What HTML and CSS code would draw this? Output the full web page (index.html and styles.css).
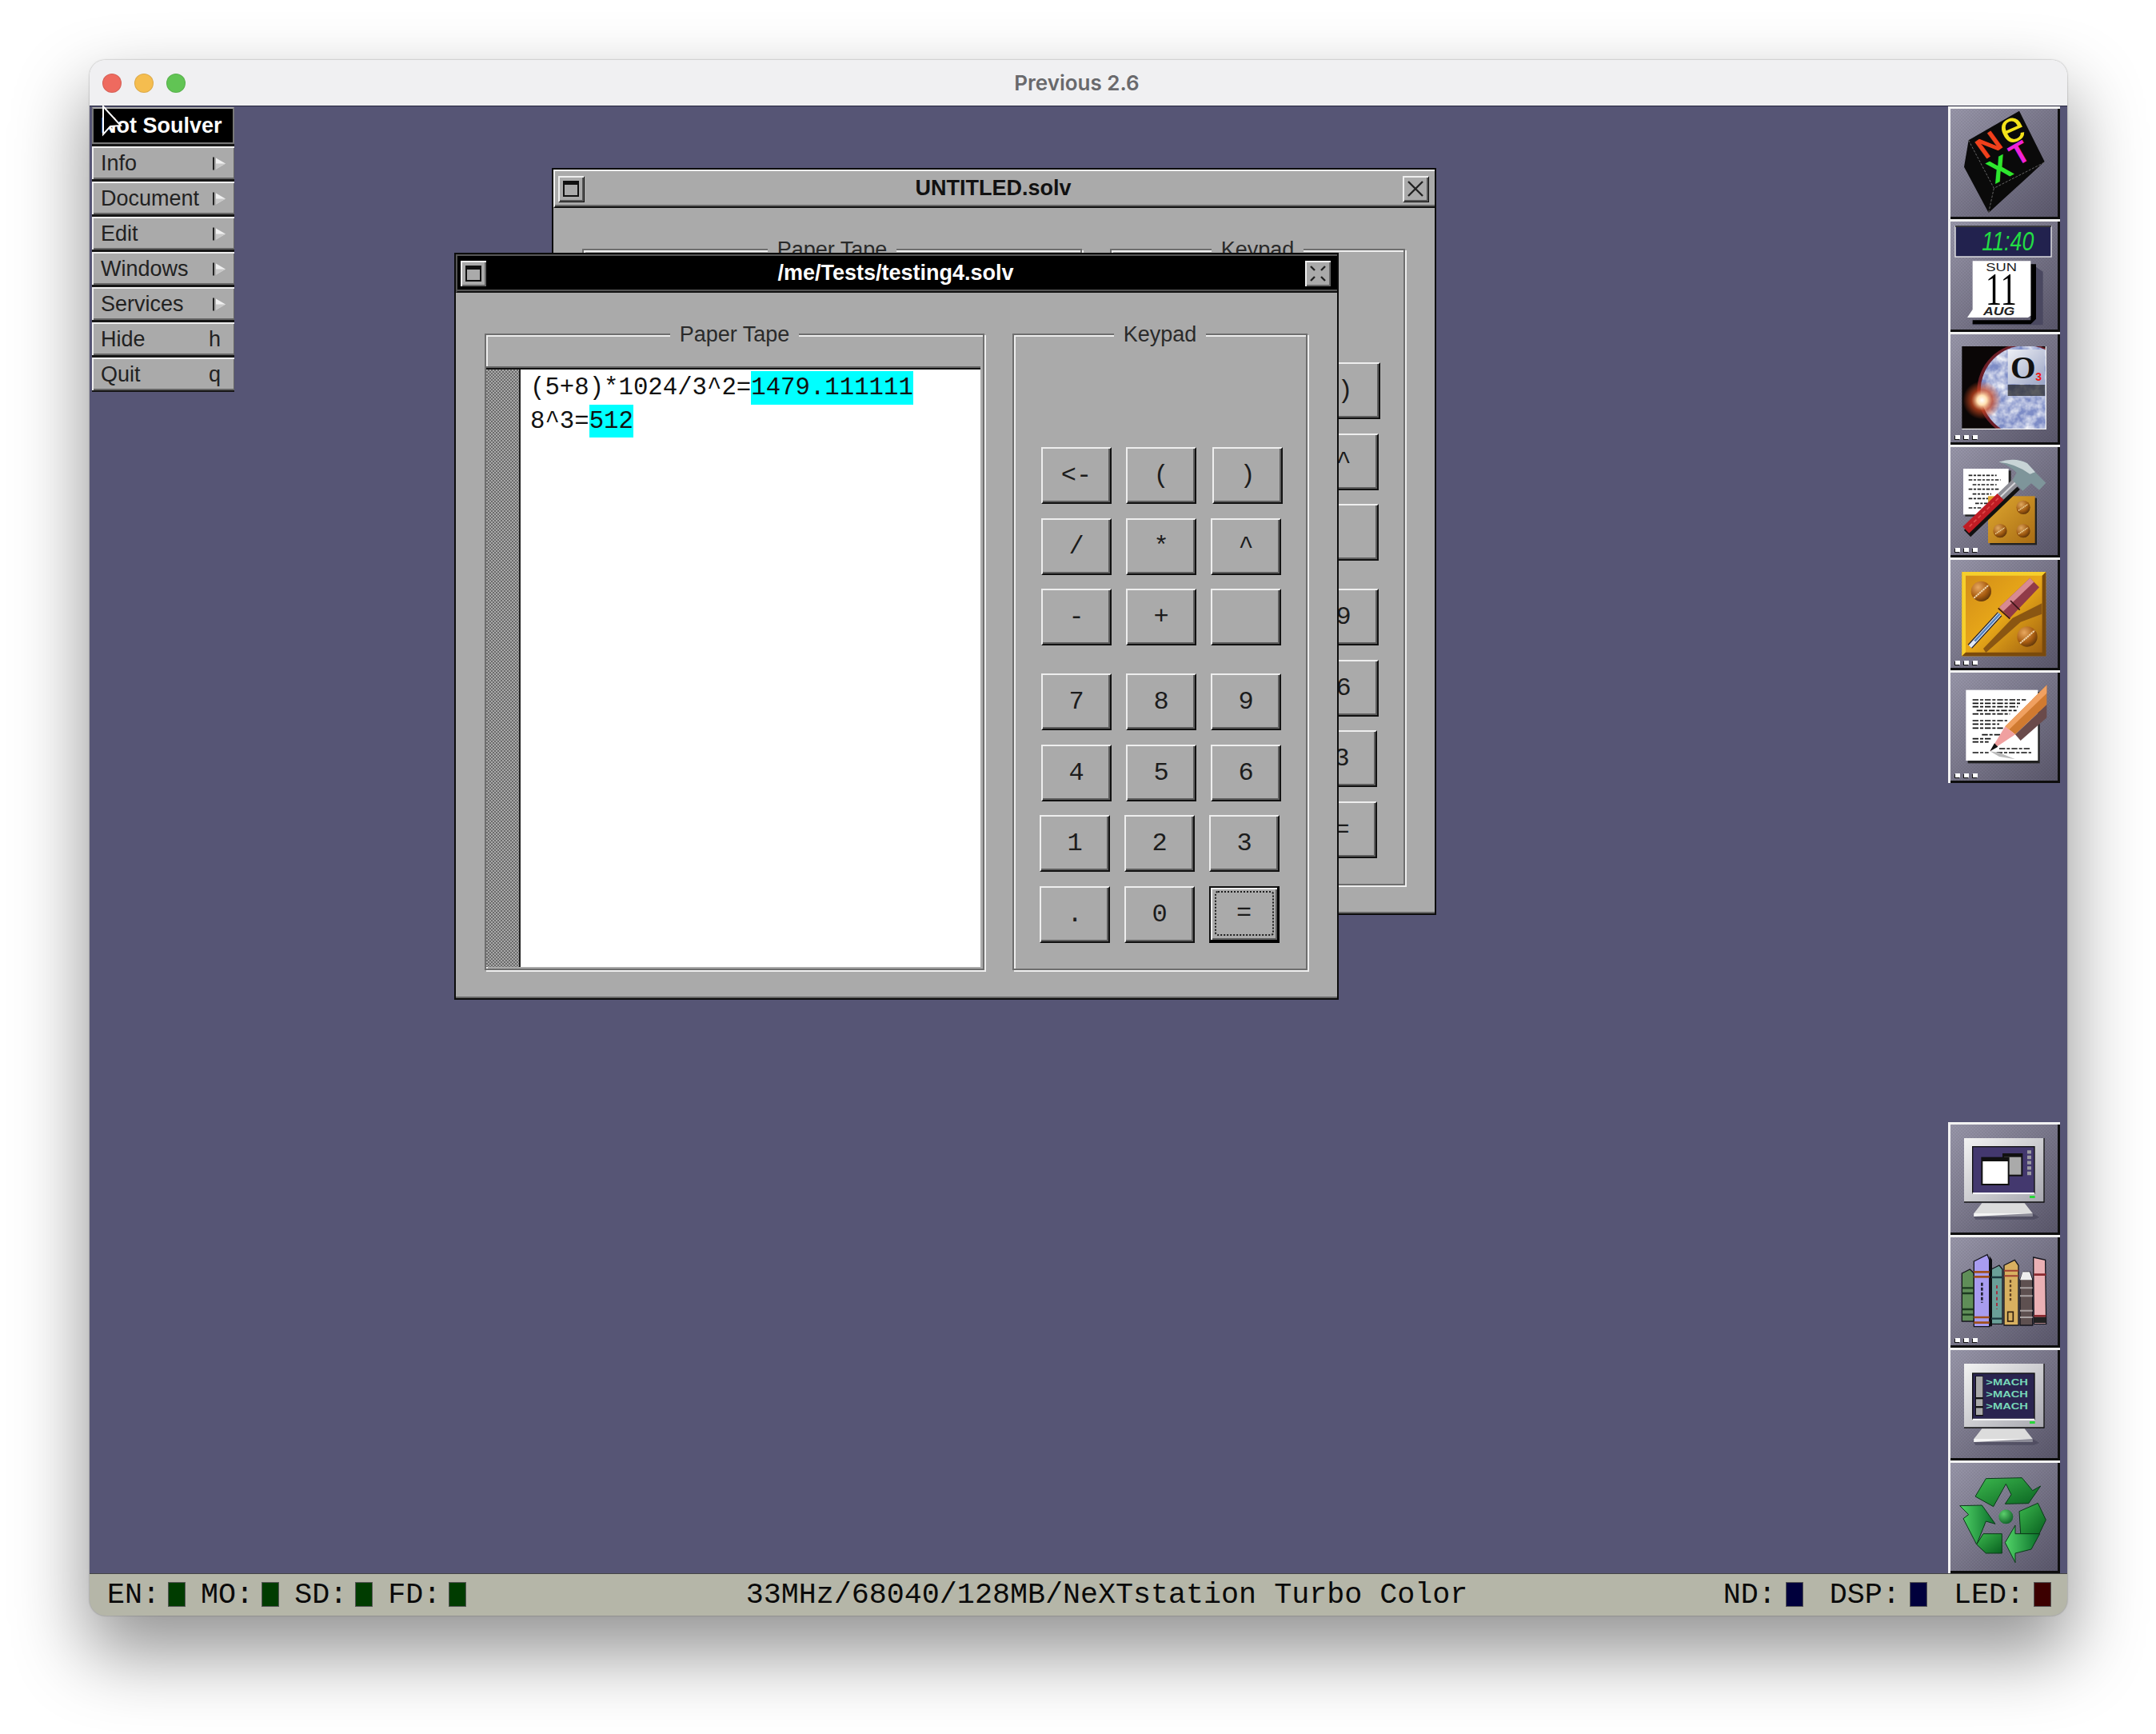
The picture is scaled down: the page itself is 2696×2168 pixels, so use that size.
FILE: index.html
```html
<!DOCTYPE html>
<html>
<head>
  <meta charset="UTF-8" />
  <title>Previous 2.6</title>
  <link rel="stylesheet" href="styles.css">
</head>
<body>
  <div class="mac">
    <div class="mac-title">
      <span class="light light-red"></span>
      <span class="light light-yellow"></span>
      <span class="light light-green"></span>
      <span class="mac-name">Previous 2.6</span>
    </div>

    <div class="desktop">
      <!-- app menu -->
      <div class="menu">
        <div class="menu-title">Not Soulver</div>
        <div class="menu-item">Info <svg class="arrow" viewBox="0 0 16 16"><path d="M1 0v16" stroke="#222" stroke-width="2"/><path d="M4 1l12 7-12 7z" fill="#f0f0f0"/><path d="M4 15l12-7H4z" fill="#c8c8c8"/></svg></div>
        <div class="menu-item">Document <svg class="arrow" viewBox="0 0 16 16"><path d="M1 0v16" stroke="#222" stroke-width="2"/><path d="M4 1l12 7-12 7z" fill="#f0f0f0"/><path d="M4 15l12-7H4z" fill="#c8c8c8"/></svg></div>
        <div class="menu-item">Edit <svg class="arrow" viewBox="0 0 16 16"><path d="M1 0v16" stroke="#222" stroke-width="2"/><path d="M4 1l12 7-12 7z" fill="#f0f0f0"/><path d="M4 15l12-7H4z" fill="#c8c8c8"/></svg></div>
        <div class="menu-item">Windows <svg class="arrow" viewBox="0 0 16 16"><path d="M1 0v16" stroke="#222" stroke-width="2"/><path d="M4 1l12 7-12 7z" fill="#f0f0f0"/><path d="M4 15l12-7H4z" fill="#c8c8c8"/></svg></div>
        <div class="menu-item">Services <svg class="arrow" viewBox="0 0 16 16"><path d="M1 0v16" stroke="#222" stroke-width="2"/><path d="M4 1l12 7-12 7z" fill="#f0f0f0"/><path d="M4 15l12-7H4z" fill="#c8c8c8"/></svg></div>
        <div class="menu-item">Hide <span class="shortcut">h</span></div>
        <div class="menu-item">Quit <span class="shortcut">q</span></div>
      </div>

      <!-- window behind -->
      <div class="win win-back">
        <div class="win-bar">
          <span class="win-btn mini"><i></i></span>
          <span class="win-name">UNTITLED.solv</span>
          <span class="win-btn close"><svg viewBox="0 0 28 28"><path d="M5 5l18 18M23 5L5 23" stroke="#222" stroke-width="2.4"/></svg></span>
        </div>
        <div class="win-body">
          <fieldset class="group group-tape">
            <legend>Paper Tape</legend>
            <div class="tape"><div class="ruler"></div><div class="tape-text"></div></div>
          </fieldset>
          <fieldset class="group group-keys">
            <legend>Keypad</legend>
            <div class="keys">
              <div class="key-row"><button class="key">&lt;-</button><button class="key">(</button><button class="key key-far">)</button></div>
              <div class="key-row"><button class="key">/</button><button class="key">*</button><button class="key">^</button></div>
              <div class="key-row"><button class="key">-</button><button class="key">+</button><button class="key"></button></div>
              <div class="key-row key-row-split"><button class="key">7</button><button class="key">8</button><button class="key">9</button></div>
              <div class="key-row"><button class="key">4</button><button class="key">5</button><button class="key">6</button></div>
              <div class="key-row key-row-left"><button class="key">1</button><button class="key">2</button><button class="key">3</button></div>
              <div class="key-row key-row-left"><button class="key">.</button><button class="key">0</button><button class="key">=</button></div>
            </div>
          </fieldset>
        </div>
      </div>

      <!-- key window -->
      <div class="win win-front">
        <div class="win-bar">
          <span class="win-btn mini"><i></i></span>
          <span class="win-name">/me/Tests/testing4.solv</span>
          <span class="win-btn close"><svg viewBox="0 0 28 28"><path d="M5 5l5 5M23 5l-5 5M5 23l5-5M23 23l-5-5" stroke="#222" stroke-width="2.4"/></svg></span>
        </div>
        <div class="win-body">
          <fieldset class="group group-tape">
            <legend>Paper Tape</legend>
            <div class="tape">
              <div class="ruler"></div>
              <div class="tape-text">
                <div class="tape-line">(5+8)*1024/3^2=<span class="hl">1479.111111</span></div>
                <div class="tape-line">8^3=<span class="hl">512</span></div>
              </div>
            </div>
          </fieldset>
          <fieldset class="group group-keys">
            <legend>Keypad</legend>
            <div class="keys">
              <div class="key-row"><button class="key">&lt;-</button><button class="key">(</button><button class="key key-far">)</button></div>
              <div class="key-row"><button class="key">/</button><button class="key">*</button><button class="key">^</button></div>
              <div class="key-row"><button class="key">-</button><button class="key">+</button><button class="key"></button></div>
              <div class="key-row key-row-split"><button class="key">7</button><button class="key">8</button><button class="key">9</button></div>
              <div class="key-row"><button class="key">4</button><button class="key">5</button><button class="key">6</button></div>
              <div class="key-row key-row-left"><button class="key">1</button><button class="key">2</button><button class="key">3</button></div>
              <div class="key-row key-row-left"><button class="key">.</button><button class="key">0</button><button class="key key-default"><span>=</span></button></div>
            </div>
          </fieldset>
        </div>
      </div>

      <!-- dock -->
      <div class="dock">
        <div class="tile">
          <svg viewBox="48 38 420 423">
            <polygon points="315,55 410,245 200,437 108,265 125,165" fill="#0a0a0a"/>
            <path d="M125 165L220 345L410 248M220 345L200 437" stroke="#666" stroke-width="3" stroke-dasharray="9 5" fill="none"/>
            <text class="cube" transform="translate(186 240) rotate(-36) scale(1.12 1)" font-size="112" fill="#f0401c">N</text>
            <text class="cube cube-e" transform="translate(266 186) rotate(-24)" font-size="165" fill="#f4e31a">e</text>
            <text class="cube" transform="translate(224 330) rotate(-28)" font-size="124" fill="#2ee62e">X</text>
            <text class="cube" transform="translate(306 264) rotate(-30)" font-size="112" fill="#f022d8">T</text>
          </svg>
        </div>
        <div class="tile">
          <svg viewBox="48 461 420 423">
            <rect x="75" y="488" width="360" height="114" fill="#22224e" stroke="#eee" stroke-width="4"/>
            <path d="M75 488h360" stroke="#111" stroke-width="5"/>
            <text class="lcd" x="175" y="577" font-size="100" textLength="195" lengthAdjust="spacingAndGlyphs">11:40</text>
            <path d="M360 628l44 30v200H140v-8l220-2z" fill="#4a4860"/>
            <path d="M358 630h20v205l-20 20H140v-15h218z" fill="#000"/>
            <path d="M140 618h218v205l-10 7H120l20-30z" fill="#fff"/>
            <text class="cal-day" x="190" y="656" font-size="42" textLength="116" lengthAdjust="spacingAndGlyphs">SUN</text>
            <text class="cal-num" x="188" y="782" font-size="170" textLength="118" lengthAdjust="spacingAndGlyphs">11</text>
            <text class="cal-mon" x="180" y="822" font-size="44" textLength="118" lengthAdjust="spacingAndGlyphs">AUG</text>
          </svg>
        </div>
        <div class="tile">
          <svg viewBox="48 884 420 423">
            <defs>
              <radialGradient id="flare"><stop offset="0" stop-color="#fff"/><stop offset=".25" stop-color="#ffe0b0"/><stop offset=".55" stop-color="#d04a20" stop-opacity=".7"/><stop offset="1" stop-color="#d04a20" stop-opacity="0"/></radialGradient>
              <clipPath id="space"><rect x="100" y="938" width="315" height="310"/></clipPath>
              <filter id="clouds" x="0" y="0" width="1" height="1"><feTurbulence type="fractalNoise" baseFrequency=".03" numOctaves="3" seed="4"/><feColorMatrix values="0 0 0 0 1 0 0 0 0 1 0 0 0 0 1 1.6 0 0 0 -0.45"/><feComposite in2="SourceGraphic" operator="in"/></filter>
              <linearGradient id="o3" x1="0" y1="0" x2="1" y2="1"><stop offset="0" stop-color="#eef0f6"/><stop offset="1" stop-color="#9aa4c4"/></linearGradient>
            </defs>
            <rect x="100" y="938" width="315" height="310" fill="#0a0606"/>
            <g clip-path="url(#space)">
              <circle cx="335" cy="1105" r="178" fill="#6d1f28"/>
              <circle cx="340" cy="1105" r="170" fill="#7d8cc6"/>
              <circle cx="340" cy="1105" r="170" fill="#fff" filter="url(#clouds)"/>
              <circle cx="175" cy="1140" r="72" fill="url(#flare)"/>
              <rect x="272" y="1082" width="140" height="42" fill="#222" opacity=".7"/>
            </g>
            <rect x="272" y="950" width="138" height="130" fill="url(#o3)"/>
            <text class="omni" x="282" y="1058" font-size="122">O</text>
            <text class="omni-3" x="376" y="1068" font-size="42">3</text>
            <path d="M415 938v310H100" stroke="#eee" stroke-width="4" fill="none"/>
          </svg>
          <span class="dots"><i></i><i></i><i></i></span>
        </div>
        <div class="tile">
          <svg viewBox="48 15 420 423">
            <defs>
              <linearGradient id="gold" x1="0" y1="0" x2="1" y2="1"><stop offset="0" stop-color="#e0a830"/><stop offset="1" stop-color="#a86c14"/></linearGradient>
              <radialGradient id="screw" cx=".35" cy=".3" r=".8"><stop offset="0" stop-color="#e0a860"/><stop offset=".6" stop-color="#a05a10"/><stop offset="1" stop-color="#4e2a08"/></radialGradient>
            </defs>
            <rect x="112" y="112" width="172" height="172" fill="#222"/>
            <rect x="105" y="105" width="170" height="172" fill="#fff"/>
            <path d="M125 130h105M125 147h120M140 165h90M125 182h115M140 200h70M125 217h90M150 235h60M125 252h50" stroke="#222" stroke-width="5" stroke-dasharray="14 5 9 5"/>
            <rect x="205" y="215" width="176" height="176" fill="#222"/>
            <rect x="198" y="208" width="176" height="176" fill="url(#gold)"/>
            <circle cx="330" cy="250" r="26" fill="url(#screw)"/><path d="M312 262l36-24" stroke="#f0d8a0" stroke-width="4" stroke-dasharray="5 2"/>
            <circle cx="243" cy="338" r="26" fill="url(#screw)"/><path d="M225 350l36-24" stroke="#f0d8a0" stroke-width="4" stroke-dasharray="5 2"/>
            <circle cx="330" cy="338" r="26" fill="url(#screw)"/><path d="M312 350l36-24" stroke="#f0d8a0" stroke-width="4" stroke-dasharray="5 2"/>
            <path d="M120 348L305 170" stroke="#111" stroke-width="36"/>
            <path d="M115 335L245 210" stroke="#c01c24" stroke-width="34"/>
            <path d="M128 322L240 212" stroke="#e04848" stroke-width="5" stroke-dasharray="14 9"/>
            <path d="M245 210L310 148" stroke="#8e8e96" stroke-width="32"/>
            <path d="M245 210L310 148" stroke="#d8d8dc" stroke-width="6"/>
            <path d="M238 80Q300 60 345 85L375 118 415 158 390 185 360 160 328 188 290 148 305 120Q275 90 238 80z" fill="#7e959a"/>
            <path d="M238 80Q300 60 345 85L375 118 355 125Q300 85 238 80z" fill="#c8d4d6"/>
          </svg>
          <span class="dots"><i></i><i></i><i></i></span>
        </div>
        <div class="tile">
          <svg viewBox="48 438 420 423">
            <defs>
              <linearGradient id="plate" x1="0" y1="0" x2="1" y2="1"><stop offset="0" stop-color="#d08a18"/><stop offset=".5" stop-color="#e8a818"/><stop offset="1" stop-color="#985a10"/></linearGradient>
              <radialGradient id="screw2" cx=".35" cy=".3" r=".8"><stop offset="0" stop-color="#e8a860"/><stop offset=".6" stop-color="#a85c10"/><stop offset="1" stop-color="#52300a"/></radialGradient>
            </defs>
            <rect x="100" y="492" width="315" height="316" fill="url(#plate)"/>
            <path d="M100 492h315l-14 14H114v288l-14 14z" fill="#f6cf2c"/>
            <path d="M415 492v316H100l14-14h287V506z" fill="#7a4a0c"/>
            <path d="M190 795L320 680 400 650V610L290 665 180 780z" fill="#8a5612"/>
            <circle cx="172" cy="565" r="38" fill="url(#screw2)"/><path d="M145 590l55-48" stroke="#f0d8b0" stroke-width="6" stroke-dasharray="7 2"/>
            <circle cx="345" cy="735" r="38" fill="url(#screw2)"/><path d="M318 760l55-48" stroke="#f0d8b0" stroke-width="6" stroke-dasharray="7 2"/>
            <path d="M130 772L242 650" stroke="#223" stroke-width="22"/>
            <path d="M130 772L242 650" stroke="#dfe8f4" stroke-width="14"/>
            <path d="M148 752L242 650" stroke="#5585c2" stroke-width="8"/>
            <path d="M240 625L355 515 390 550 280 665z" fill="#903a48"/>
            <path d="M240 625L355 515 370 530 255 640z" fill="#d88a92"/>
            <path d="M282 600l35 35M236 628l44 40" stroke="#3a1418" stroke-width="5"/>
          </svg>
          <span class="dots"><i></i><i></i><i></i></span>
        </div>
        <div class="tile">
          <svg viewBox="48 861 420 423">
            <defs><clipPath id="pencilclip"><rect x="100" y="900" width="318" height="320"/></clipPath></defs>
            <rect x="122" y="942" width="270" height="268" fill="#222"/>
            <rect x="115" y="935" width="270" height="265" fill="#fff"/>
            <path d="M140 972h200M140 985h180M140 998h170M155 1012h150M140 1025h140M140 1050h130M140 1063h100M140 1078h120M175 1103h70M140 1118h70M140 1130h60M240 1155h120M140 1170h60M230 1170h130" stroke="#111" stroke-width="5" stroke-dasharray="22 6 12 6"/>
            <path d="M205 1165L240 1185 300 1195 240 1170z" fill="#bbb"/>
            <g clip-path="url(#pencilclip)">
              <path d="M262 1072L420 915 440 970 300 1102z" fill="#d07a30"/>
              <path d="M262 1072L420 915 428 938 275 1085z" fill="#f0a060"/>
              <path d="M300 1102L440 970V1020L320 1125z" fill="#6a4a4a"/>
              <path d="M205 1165L262 1072 300 1102z" fill="#f0a0a0"/>
              <path d="M205 1165L222 1135 235 1148z" fill="#111"/>
            </g>
          </svg>
          <span class="dots"><i></i><i></i><i></i></span>
        </div>

        <div class="tile tile-low">
          <svg viewBox="48 38 420 423">
            <use href="#monitor"/>
            <rect x="140" y="130" width="232" height="175" fill="#43386e" stroke="#111" stroke-width="4"/>
            <path d="M372 305H140" stroke="#fff" stroke-width="6"/>
            <rect x="255" y="158" width="70" height="80" fill="#aaa" stroke="#111" stroke-width="6"/>
            <path d="M255 163h70" stroke="#111" stroke-width="12"/>
            <rect x="175" y="172" width="100" height="100" fill="#fff" stroke="#111" stroke-width="6"/>
            <path d="M175 178h100" stroke="#111" stroke-width="14"/>
            <path d="M345 150h15M345 170h15M345 190h15M345 210h15M345 230h15" stroke="#9a9aa0" stroke-width="13"/>
          </svg>
        </div>
        <div class="tile">
          <svg viewBox="48 461 420 423">
            <g stroke="#15151c" stroke-width="4">
              <path d="M100 605l30-15 15 15v180H100z" fill="#5f8e58"/>
              <path d="M145 560l50-25 8 20v250h-58z" fill="#a89cf0"/>
              <path d="M210 590l30-15 12 15v205h-42z" fill="#6a9f98"/>
              <path d="M258 575l40-20 14 20v225h-54z" fill="#d8b060"/>
              <path d="M318 630l12-30h25l10 30v170h-47z" fill="#5e5050"/>
              <path d="M368 545l45 10 3 240h-46z" fill="#eab0b4"/>
            </g>
            <path d="M203 540l10 14v250h-10z" fill="#0c0c10"/>
            <path d="M100 660h45M100 680h45M100 740h45M100 760h45" stroke="#1c3a20" stroke-width="7"/>
            <path d="M145 600h58M145 618h58M145 770h58M145 790h58" stroke="#a0501c" stroke-width="8"/>
            <path d="M175 640v75" stroke="#223" stroke-width="8" stroke-dasharray="12 6"/>
            <path d="M210 620h42M210 775h42" stroke="#1c3a40" stroke-width="7"/>
            <path d="M231 650v90" stroke="#a03040" stroke-width="6" stroke-dasharray="12 10"/>
            <path d="M258 595h54M258 615h54" stroke="#a04030" stroke-width="6"/>
            <path d="M282 630v80" stroke="#604020" stroke-width="7" stroke-dasharray="10 7"/>
            <rect x="272" y="750" width="20" height="35" fill="none" stroke="#302010" stroke-width="5"/>
            <path d="M328 600h26l10 30h-46z" fill="#eee"/>
            <path d="M318 660h47M318 690h47M318 745h47M318 770h47" stroke="#a8a0a0" stroke-width="6"/>
            <path d="M370 610h45M370 765h45" stroke="#8a2a30" stroke-width="8"/>
            <path d="M370 780h45" stroke="#222" stroke-width="22"/>
          </svg>
          <span class="dots"><i></i><i></i><i></i></span>
        </div>
        <div class="tile">
          <svg viewBox="48 12 420 423">
            <g transform="translate(0 -26)"><use href="#monitor"/></g>
            <rect x="140" y="108" width="232" height="172" fill="#2a2450" stroke="#111" stroke-width="4"/>
            <path d="M372 281H140" stroke="#fff" stroke-width="6"/>
            <rect x="150" y="118" width="30" height="150" fill="#111"/>
            <rect x="153" y="120" width="25" height="78" fill="#aaa"/>
            <rect x="153" y="205" width="25" height="26" fill="#aaa"/>
            <rect x="153" y="238" width="25" height="26" fill="#aaa"/>
            <text class="mach" x="190" y="154" font-size="30" textLength="158" lengthAdjust="spacingAndGlyphs">&gt;MACH</text>
            <text class="mach" x="190" y="199" font-size="30" textLength="158" lengthAdjust="spacingAndGlyphs">&gt;MACH</text>
            <text class="mach" x="190" y="244" font-size="30" textLength="158" lengthAdjust="spacingAndGlyphs">&gt;MACH</text>
          </svg>
        </div>
        <div class="tile">
          <svg viewBox="48 437 420 423">
            <defs>
              <linearGradient id="rec1" x1="0" y1="0" x2="1" y2="1"><stop offset="0" stop-color="#3cb84e"/><stop offset="1" stop-color="#08601f"/></linearGradient>
              <linearGradient id="rec2" x1="0" y1="0" x2="1" y2="0"><stop offset="0" stop-color="#52d468"/><stop offset="1" stop-color="#0a6e2a"/></linearGradient>
              <radialGradient id="rec3" cx=".35" cy=".3" r=".8"><stop offset="0" stop-color="#5cd06c"/><stop offset="1" stop-color="#0a5a24"/></radialGradient>
            </defs>
            <g stroke="#0a3a18" stroke-width="3">
              <polygon points="150,572 190,505 325,502 365,550 395,533 350,598 262,600 285,565 265,525 218,610" fill="url(#rec1)"/>
              <polygon points="92,607 175,605 225,675 190,665 155,752 105,655 125,640" fill="url(#rec2)"/>
              <polygon points="155,752 180,712 250,712 250,785 190,785" fill="url(#rec1)"/>
              <polygon points="315,628 385,597 415,660 390,712 320,712" fill="url(#rec1)"/>
              <polygon points="300,820 262,745 300,680 300,712 392,712 360,770 300,785" fill="url(#rec2)"/>
            </g>
            <circle cx="265" cy="648" r="27" fill="url(#rec3)"/>
          </svg>
        </div>

        <!-- shared monitor body -->
        <svg class="defs-only">
          <defs>
            <linearGradient id="mon" x1="0" y1="0" x2="1" y2="1"><stop offset="0" stop-color="#f2f2f2"/><stop offset="1" stop-color="#a8a8b0"/></linearGradient>
            <g id="monitor">
              <path d="M215 338h100l20 20H195z" fill="#66657a"/>
              <path d="M175 342h160l30 38v12H145v-12z" fill="#dcdcdc"/>
              <path d="M145 380h220v12H145z" fill="#f4f4f4"/>
              <path d="M365 380l25 15-20 8H150l-5-11z" fill="#444356" opacity=".6"/>
              <rect x="108" y="98" width="300" height="240" fill="url(#mon)"/>
              <path d="M108 338h300V98" stroke="#111" stroke-width="4" fill="none"/>
              <rect x="354" y="314" width="20" height="9" fill="#28d838"/>
            </g>
          </defs>
        </svg>
      </div>

      <svg class="cursor" viewBox="0 0 26 40"><path d="M2 1v35l9-10 13-1z" fill="#000" stroke="#fff" stroke-width="2"/></svg>
    </div>

    <div class="status">
      <div class="status-group">
        <span class="stat">EN:<i class="led led-green"></i></span>
        <span class="stat">MO:<i class="led led-green"></i></span>
        <span class="stat">SD:<i class="led led-green"></i></span>
        <span class="stat">FD:<i class="led led-green"></i></span>
      </div>
      <div class="status-main">33MHz/68040/128MB/NeXTstation Turbo Color</div>
      <div class="status-group status-right">
        <span class="stat stat-wide">ND:<i class="led led-blue"></i></span>
        <span class="stat stat-wide">DSP:<i class="led led-blue"></i></span>
        <span class="stat stat-wide">LED:<i class="led led-red"></i></span>
      </div>
    </div>
  </div>
</body>
</html>
```

FILE: styles.css
```css
html,
body {
  margin: 0;
  overflow: hidden;
  background: #fff;
}

body {
  box-sizing: border-box;
  height: 2168px;
  padding: 75px 0 0 112px;
  font-family: "Liberation Sans", sans-serif;
}

.mac {
  width: 2473px;
  height: 1945px;
  border-radius: 20px;
  overflow: hidden;
  display: flex;
  flex-direction: column;
}

body::before {
  content: "";
  position: absolute;
  left: 112px;
  top: 75px;
  width: 2473px;
  height: 1945px;
  border-radius: 20px;
  box-shadow: 0 44px 90px 4px rgba(0, 0, 0, 0.42), 0 0 2px rgba(0, 0, 0, 0.4);
}

.mac-title {
  position: relative;
  height: 57px;
  flex: none;
  display: flex;
  align-items: center;
  gap: 16px;
  padding-left: 16px;
  background: #f0f0f2;
}

.light {
  width: 24px;
  height: 24px;
  border-radius: 50%;
  box-sizing: border-box;
  border: 1px solid rgba(0, 0, 0, 0.1);
}

.light-red { background: #ee6a5f; }
.light-yellow { background: #f5bd4f; }
.light-green { background: #61c454; }

.mac-name {
  position: absolute;
  left: 0;
  right: 4px;
  text-align: center;
  font-family: Inter, sans-serif;
  font-size: 26px;
  font-weight: 600;
  color: #69696c;
}

.desktop {
  position: relative;
  flex: 1;
  background: #565575;
  box-shadow: inset 0 1px #24243c;
  overflow: hidden;
}

/* menu */
.menu {
  position: absolute;
  left: 3px;
  top: 2px;
  width: 178px;
  display: flex;
  flex-direction: column;
  gap: 3px;
  padding-bottom: 2px;
  background: #161616;
  font-size: 27px;
  color: #222;
}

.menu-title,
.menu-item {
  box-sizing: border-box;
  display: flex;
  align-items: center;
  justify-content: space-between;
  padding: 0 14px 0 9px;
  white-space: nowrap;
}

.menu-title {
  height: 46px;
  padding-right: 0;
  border: 2px solid #777;
  border-top-color: #aaa;
  background: #000;
  color: #fff;
  font-weight: bold;
}

.menu-item {
  height: 41px;
  background: #aaa;
  border-top: 2px solid #eee;
  border-left: 2px solid #eee;
  box-shadow: inset -1px -2px #666;
}

.arrow {
  flex: none;
  width: 16px;
  height: 17px;
  margin-right: -3px;
}

.shortcut {
  margin-right: 3px;
}

/* windows */
.win {
  position: absolute;
  box-sizing: border-box;
  width: 1106px;
  height: 934px;
  border: 2px solid #0c0c0c;
  background: #aaa;
  display: flex;
  flex-direction: column;
}

.win-back {
  left: 578px;
  top: 78px;
}

.win-front {
  left: 456px;
  top: 184px;
}

.win-bar {
  flex: none;
  box-sizing: border-box;
  height: 48px;
  display: flex;
  align-items: center;
  justify-content: space-between;
  padding: 0 8px 0 4px;
  background: #aaa;
  border-top: 2px solid #eee;
  border-left: 2px solid #eee;
  border-bottom: 2px solid #111;
  box-shadow: inset 0 -2px #666;
}

.win-front .win-bar {
  background: #000;
  border-top-color: #555;
  border-left-color: #555;
  box-shadow: inset 0 -2px #555;
}

.win-name {
  margin-top: -2px;
  font-size: 27px;
  font-weight: bold;
  color: #111;
}

.win-front .win-name {
  color: #fff;
}

.win-btn {
  box-sizing: border-box;
  width: 32px;
  height: 32px;
  display: flex;
  align-items: center;
  justify-content: center;
  background: #aaa;
  border-top: 2px solid #eee;
  border-left: 2px solid #eee;
  box-shadow: inset -2px -2px #666;
}

.win-back .win-btn {
  box-shadow: inset -2px -2px #555, 1px 1px #111;
}

.win-btn svg {
  width: 28px;
  height: 28px;
  margin: -2px 0 0 -2px;
}

.mini i {
  box-sizing: border-box;
  width: 20px;
  height: 20px;
  margin: -2px 0 0 -2px;
  background: #aaa;
  border: 2px solid #111;
  border-top-width: 5px;
}

.win-body {
  flex: 1;
  display: flex;
  gap: 35px;
  padding: 37px 0 0 36px;
  box-shadow: inset 0 -2px #666;
}

/* groups */
.group {
  box-sizing: border-box;
  margin: 0;
  padding: 0;
  height: 810px;
  border: 2px solid #6e6e6e;
  box-shadow: 2px 2px #eee, inset 2px 2px #eee;
  min-width: 0;
}

.group-tape { width: 625px; }
.group-keys { width: 369px; }

.group legend {
  margin: 0 auto;
  padding: 0 12px;
  background: #aaa;
  font-size: 27px;
  line-height: 30px;
  color: #2a2a2a;
}

.tape {
  box-sizing: border-box;
  height: 749px;
  margin: 27px 3px 0 0;
  display: flex;
  background: #fff;
  border-top: 2px solid #111;
  box-shadow: 0 -2px #666;
}

.ruler {
  flex: none;
  width: 41px;
  border-right: 2px solid #222;
  background: repeating-conic-gradient(#6c6c6c 0 25%, #a8a8a8 0 50%) 0 0 / 4px 4px;
}

.tape-text {
  flex: 1;
  padding: 2px 0 0 12px;
  font-family: "Liberation Mono", monospace;
  font-size: 30.7px;
  line-height: 41.5px;
  color: #111;
}

.hl {
  display: inline-block;
  background: #0ff;
}

/* keypad */
.keys {
  margin: 126px 0 0 34px;
  display: flex;
  flex-direction: column;
  gap: 17.5px;
}

.key-row {
  display: flex;
  gap: 18px;
}

.key-row-split {
  margin-top: 17.5px;
}

.key-row-left {
  margin-left: -2px;
}

.key {
  box-sizing: border-box;
  width: 88px;
  height: 71px;
  padding: 0;
  background: #aaa;
  border: 0;
  border-top: 2px solid #eee;
  border-left: 2px solid #eee;
  border-right: 2px solid #111;
  border-bottom: 2px solid #111;
  box-shadow: inset -2px -2px #5e5e5e;
  font-family: "Liberation Mono", monospace;
  font-size: 32px;
  color: #1c1c1c;
}

.key-far {
  margin-left: 2px;
}

.key-default {
  display: flex;
  align-items: center;
  justify-content: center;
  border-top: 2px solid #111;
  border-left: 2px solid #111;
  border-right: 3px solid #000;
  border-bottom: 4px solid #000;
  box-shadow: inset 2px 2px #eee, inset -2px -2px #5e5e5e;
}

.key-default span {
  box-sizing: border-box;
  width: 74px;
  height: 56px;
  border: 2px dotted #1c1c1c;
  border-radius: 4px;
  line-height: 52px;
}

/* dock */
.dock {
  position: absolute;
  top: 1px;
  right: 9px;
  bottom: 0;
  width: 140px;
  display: flex;
  flex-direction: column;
}

.tile {
  position: relative;
  flex: none;
  width: 140px;
  height: 141px;
  background:
    repeating-conic-gradient(rgba(0, 0, 0, 0.05) 0 25%, transparent 0 50%) 0 0 / 4px 4px,
    linear-gradient(135deg, #9a98ab, #59566a);
  box-shadow: inset 3px 3px #f2f2f2, inset -3px -3px #0e0e0e;
}

.tile svg {
  display: block;
  width: 100%;
  height: 100%;
}

.tile-low {
  margin-top: auto;
}

.dots {
  position: absolute;
  left: 9px;
  bottom: 7px;
  display: flex;
  gap: 5px;
}

.dots i {
  width: 6px;
  height: 5px;
  background: #fff;
  box-shadow: -1px 1px #111;
}

.defs-only {
  position: absolute;
  width: 0;
  height: 0;
}

.cube {
  font-family: "Liberation Sans", sans-serif;
  font-weight: bold;
}

.cube-e {
  font-weight: normal;
}

.lcd {
  font-family: "Liberation Sans", sans-serif;
  font-style: italic;
  fill: #22dd44;
}

.cal-day {
  font-family: "Liberation Sans", sans-serif;
  fill: #222;
}

.cal-num {
  font-family: "Liberation Serif", serif;
  fill: #000;
}

.cal-mon {
  font-family: "Liberation Sans", sans-serif;
  font-style: italic;
  font-weight: bold;
  fill: #222;
}

.omni {
  font-family: "Liberation Serif", serif;
  font-weight: bold;
  fill: #111;
}

.omni-3 {
  font-family: "Liberation Sans", sans-serif;
  font-weight: bold;
  fill: #f01818;
}

.mach {
  font-family: "Liberation Sans", sans-serif;
  font-weight: bold;
  fill: #78d8b8;
}

.cursor {
  position: absolute;
  left: 15px;
  top: 0;
  width: 26px;
  height: 40px;
}

/* status bar */
.status {
  flex: none;
  box-sizing: border-box;
  height: 53px;
  display: flex;
  align-items: center;
  justify-content: space-between;
  padding: 0 20px 1px 22px;
  background: #b5b6a8;
  border-top: 1px solid #444;
  font-family: "Liberation Mono", monospace;
  font-size: 36.7px;
  color: #0a0a0a;
}

.status-group {
  display: flex;
  gap: 19px;
}

.status-right {
  gap: 33px;
}

.stat {
  display: flex;
  align-items: center;
  gap: 10px;
}

.stat-wide {
  gap: 12px;
}

.status-main {
  margin-left: 30px;
}

.led {
  box-sizing: border-box;
  width: 22px;
  height: 31px;
  border: 1px solid #555;
}

.led-green { background: #003c00; }
.led-blue { background: #00003c; }
.led-red { background: #3c0000; }
```
